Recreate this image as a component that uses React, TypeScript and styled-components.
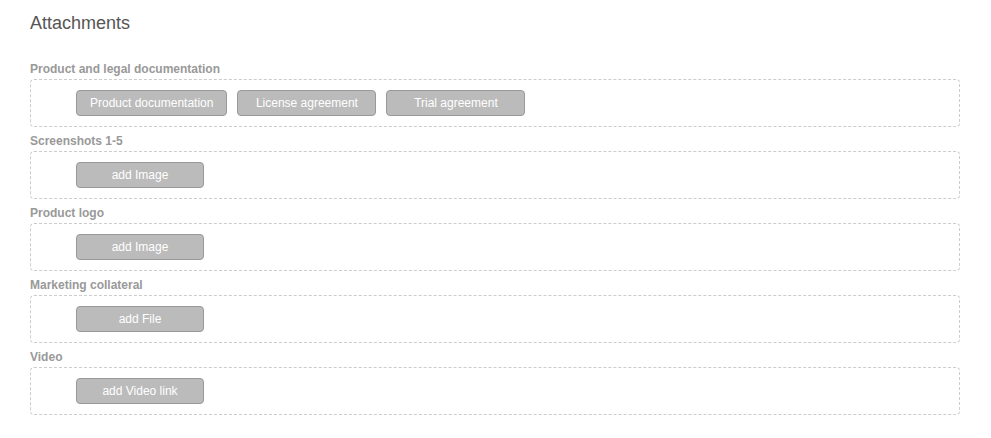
import React from 'react'
import styled, { createGlobalStyle } from 'styled-components'

const GlobalStyle = createGlobalStyle`
body {
    margin: 0;
    background: #fff;
    font-family: "Liberation Sans", Arial, sans-serif;
}
`

const sections: { title: string; buttons: string[]; wide?: boolean }[] = [
    { title: 'Product and legal documentation', buttons: ['Product documentation', 'License agreement', 'Trial agreement'], wide: true },
    { title: 'Screenshots 1-5', buttons: ['add Image'] },
    { title: 'Product logo', buttons: ['add Image'] },
    { title: 'Marketing collateral', buttons: ['add File'] },
    { title: 'Video', buttons: ['add Video link'] },
]

const App = () => {
    return (
        <Page>
            <GlobalStyle />
            <Title>Attachments</Title>
            {sections.map((s) => (
                <Section key={s.title}>
                    <Label>{s.title}</Label>
                    <Box>
                        {s.buttons.map((b) => (
                            <Button key={b} $wide={s.wide}>{b}</Button>
                        ))}
                    </Box>
                </Section>
            ))}
        </Page>
    )
}

export default App

const Page = styled.main`
width: 930px;
padding: 13px 0 0 30px;
`
const Title = styled.h2`
font-size: 18px;
font-weight: 400;
color: #555;
margin: 0 0 28px 0;
line-height: 21px;
`
const Section = styled.section`
display: flex;
flex-direction: column;
margin-bottom: 7px;
`
const Label = styled.div`
font-size: 12px;
font-weight: 700;
color: #999;
line-height: 14px;
margin-bottom: 3px;
`
const Box = styled.div`
box-sizing: border-box;
height: 48px;
border: 1px dashed #ccc;
border-radius: 4px;
padding: 10px 0 0 45px;
display: flex;
gap: 10px;
`
const Button = styled.button<{ $wide?: boolean }>`
box-sizing: border-box;
height: 26px;
min-width: ${(p) => (p.$wide ? '139px' : '128px')};
padding: 0 13px;
background: #bbb;
border: 1px solid #999;
border-radius: 4px;
color: #fff;
font-family: "Liberation Sans", Arial, sans-serif;
font-size: 12px;
cursor: pointer;
`
